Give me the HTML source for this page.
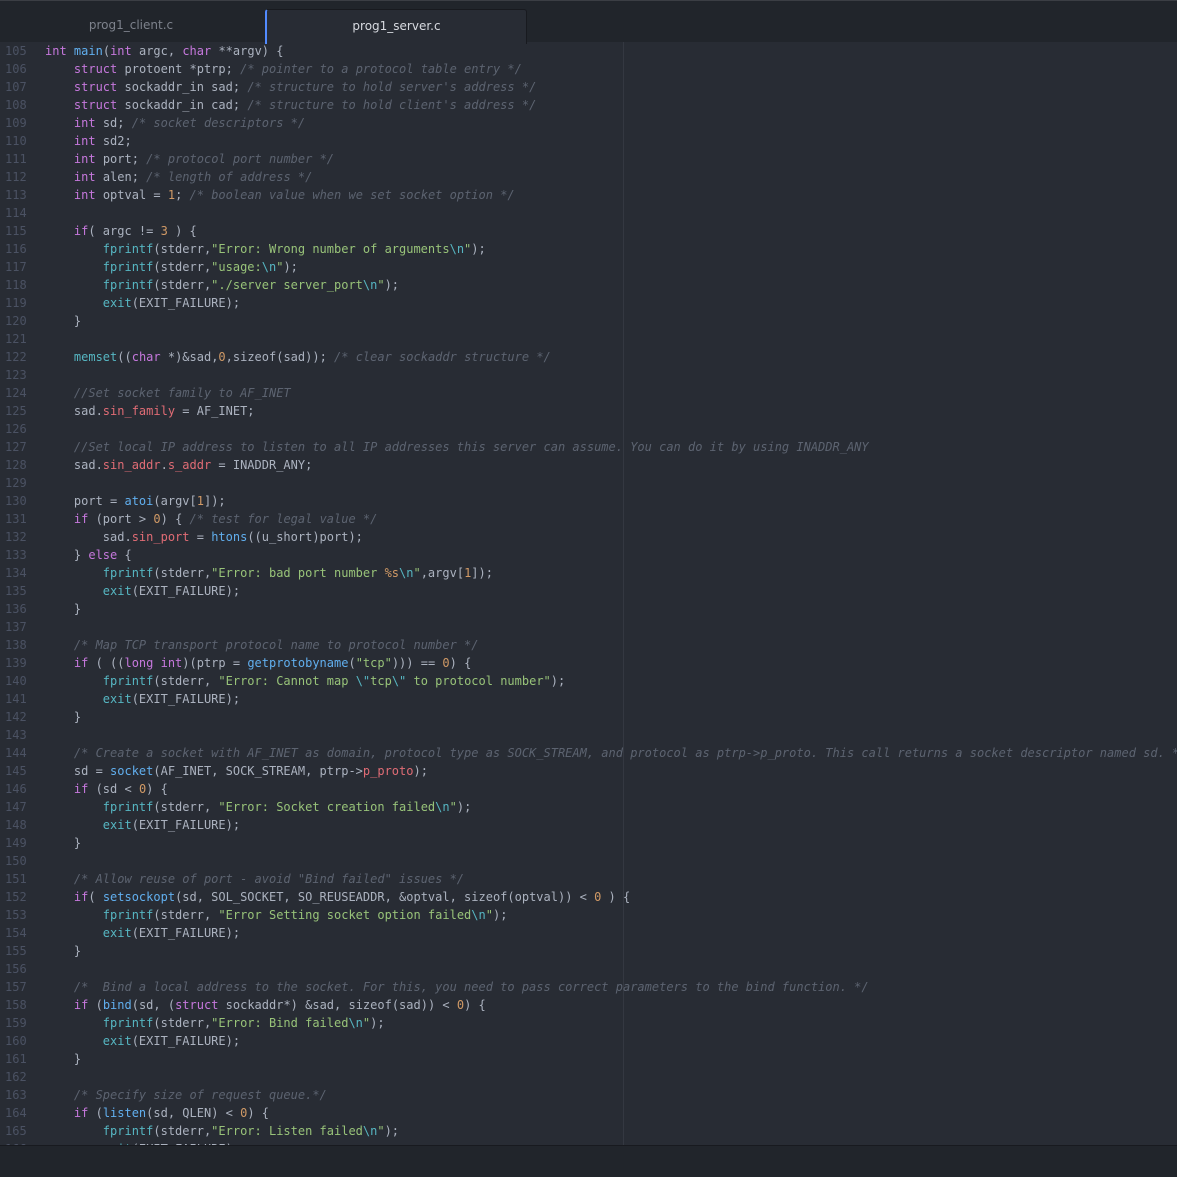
<!DOCTYPE html>
<html><head><meta charset="utf-8"><style>
html,body{margin:0;padding:0;}
body{width:1177px;height:1176px;overflow:hidden;background:#282c34;position:relative;font-family:"DejaVu Sans Mono","Liberation Mono",monospace;}
#top{position:absolute;left:0;top:0;width:1177px;height:42px;background:#21252b;border-top:1px solid #3b3e44;box-sizing:border-box;}
.tab{position:absolute;top:8px;height:34px;font:12px "DejaVu Sans","Liberation Sans",sans-serif;line-height:32px;text-align:center;}
#t1{left:0;width:262px;color:#7d828c;}
#t2{left:265px;width:259px;background:#282c34;color:#d7dae0;border-left:2px solid #528bff;border-right:1px solid #181a1f;border-top:1px solid #181a1f;border-radius:3px 3px 0 0;}
#code{position:absolute;left:0;top:42px;width:1177px;height:1103px;overflow:hidden;}
.l{height:18px;line-height:18px;font-size:12px;white-space:pre;color:#abb2bf;position:relative;}
.g{position:absolute;left:5px;width:30px;color:#4b5263;}
.t{position:absolute;left:45px;}
.k{color:#c678dd}.f{color:#61afef}.b{color:#56b6c2}.c{color:#5c6370;font-style:italic}.s{color:#98c379}.n{color:#d19a66}.m{color:#e06c75}.e{color:#56b6c2}
#wrap{position:absolute;left:623px;top:42px;width:1px;height:1103px;background:#343841;}
#bot{position:absolute;left:0;top:1145px;width:1177px;height:31px;background:#21252b;border-top:1px solid #181a1f;}
</style></head><body>
<div id="top"><div class="tab" id="t1">prog1_client.c</div><div class="tab" id="t2">prog1_server.c</div></div>
<div id="wrap"></div>
<div id="code">
<div class="l"><span class="g">105</span><span class="t"><span class="k">int</span> <span class="f">main</span>(<span class="k">int</span> argc, <span class="k">char</span> **argv) {</span></div>
<div class="l"><span class="g">106</span><span class="t">    <span class="k">struct</span> protoent *ptrp; <span class="c">/* pointer to a protocol table entry */</span></span></div>
<div class="l"><span class="g">107</span><span class="t">    <span class="k">struct</span> sockaddr_in sad; <span class="c">/* structure to hold server's address */</span></span></div>
<div class="l"><span class="g">108</span><span class="t">    <span class="k">struct</span> sockaddr_in cad; <span class="c">/* structure to hold client's address */</span></span></div>
<div class="l"><span class="g">109</span><span class="t">    <span class="k">int</span> sd; <span class="c">/* socket descriptors */</span></span></div>
<div class="l"><span class="g">110</span><span class="t">    <span class="k">int</span> sd2;</span></div>
<div class="l"><span class="g">111</span><span class="t">    <span class="k">int</span> port; <span class="c">/* protocol port number */</span></span></div>
<div class="l"><span class="g">112</span><span class="t">    <span class="k">int</span> alen; <span class="c">/* length of address */</span></span></div>
<div class="l"><span class="g">113</span><span class="t">    <span class="k">int</span> optval = <span class="n">1</span>; <span class="c">/* boolean value when we set socket option */</span></span></div>
<div class="l"><span class="g">114</span></div>
<div class="l"><span class="g">115</span><span class="t">    <span class="k">if</span>( argc != <span class="n">3</span> ) {</span></div>
<div class="l"><span class="g">116</span><span class="t">        <span class="b">fprintf</span>(stderr,<span class="s">"Error: Wrong number of arguments<span class="e">\n</span>"</span>);</span></div>
<div class="l"><span class="g">117</span><span class="t">        <span class="b">fprintf</span>(stderr,<span class="s">"usage:<span class="e">\n</span>"</span>);</span></div>
<div class="l"><span class="g">118</span><span class="t">        <span class="b">fprintf</span>(stderr,<span class="s">"./server server_port<span class="e">\n</span>"</span>);</span></div>
<div class="l"><span class="g">119</span><span class="t">        <span class="b">exit</span>(EXIT_FAILURE);</span></div>
<div class="l"><span class="g">120</span><span class="t">    }</span></div>
<div class="l"><span class="g">121</span></div>
<div class="l"><span class="g">122</span><span class="t">    <span class="b">memset</span>((<span class="k">char</span> *)&amp;sad,<span class="n">0</span>,sizeof(sad)); <span class="c">/* clear sockaddr structure */</span></span></div>
<div class="l"><span class="g">123</span></div>
<div class="l"><span class="g">124</span><span class="t">    <span class="c">//Set socket family to AF_INET</span></span></div>
<div class="l"><span class="g">125</span><span class="t">    sad.<span class="m">sin_family</span> = AF_INET;</span></div>
<div class="l"><span class="g">126</span></div>
<div class="l"><span class="g">127</span><span class="t">    <span class="c">//Set local IP address to listen to all IP addresses this server can assume. You can do it by using INADDR_ANY</span></span></div>
<div class="l"><span class="g">128</span><span class="t">    sad.<span class="m">sin_addr</span>.<span class="m">s_addr</span> = INADDR_ANY;</span></div>
<div class="l"><span class="g">129</span></div>
<div class="l"><span class="g">130</span><span class="t">    port = <span class="f">atoi</span>(argv[<span class="n">1</span>]);</span></div>
<div class="l"><span class="g">131</span><span class="t">    <span class="k">if</span> (port &gt; <span class="n">0</span>) { <span class="c">/* test for legal value */</span></span></div>
<div class="l"><span class="g">132</span><span class="t">        sad.<span class="m">sin_port</span> = <span class="f">htons</span>((u_short)port);</span></div>
<div class="l"><span class="g">133</span><span class="t">    } <span class="k">else</span> {</span></div>
<div class="l"><span class="g">134</span><span class="t">        <span class="b">fprintf</span>(stderr,<span class="s">"Error: bad port number <span class="n">%s</span><span class="e">\n</span>"</span>,argv[<span class="n">1</span>]);</span></div>
<div class="l"><span class="g">135</span><span class="t">        <span class="b">exit</span>(EXIT_FAILURE);</span></div>
<div class="l"><span class="g">136</span><span class="t">    }</span></div>
<div class="l"><span class="g">137</span></div>
<div class="l"><span class="g">138</span><span class="t">    <span class="c">/* Map TCP transport protocol name to protocol number */</span></span></div>
<div class="l"><span class="g">139</span><span class="t">    <span class="k">if</span> ( ((<span class="k">long int</span>)(ptrp = <span class="f">getprotobyname</span>(<span class="s">"tcp"</span>))) == <span class="n">0</span>) {</span></div>
<div class="l"><span class="g">140</span><span class="t">        <span class="b">fprintf</span>(stderr, <span class="s">"Error: Cannot map <span class="e">\"</span>tcp<span class="e">\"</span> to protocol number"</span>);</span></div>
<div class="l"><span class="g">141</span><span class="t">        <span class="b">exit</span>(EXIT_FAILURE);</span></div>
<div class="l"><span class="g">142</span><span class="t">    }</span></div>
<div class="l"><span class="g">143</span></div>
<div class="l"><span class="g">144</span><span class="t">    <span class="c">/* Create a socket with AF_INET as domain, protocol type as SOCK_STREAM, and protocol as ptrp-&gt;p_proto. This call returns a socket descriptor named sd. */</span></span></div>
<div class="l"><span class="g">145</span><span class="t">    sd = <span class="f">socket</span>(AF_INET, SOCK_STREAM, ptrp-&gt;<span class="m">p_proto</span>);</span></div>
<div class="l"><span class="g">146</span><span class="t">    <span class="k">if</span> (sd &lt; <span class="n">0</span>) {</span></div>
<div class="l"><span class="g">147</span><span class="t">        <span class="b">fprintf</span>(stderr, <span class="s">"Error: Socket creation failed<span class="e">\n</span>"</span>);</span></div>
<div class="l"><span class="g">148</span><span class="t">        <span class="b">exit</span>(EXIT_FAILURE);</span></div>
<div class="l"><span class="g">149</span><span class="t">    }</span></div>
<div class="l"><span class="g">150</span></div>
<div class="l"><span class="g">151</span><span class="t">    <span class="c">/* Allow reuse of port - avoid "Bind failed" issues */</span></span></div>
<div class="l"><span class="g">152</span><span class="t">    <span class="k">if</span>( <span class="f">setsockopt</span>(sd, SOL_SOCKET, SO_REUSEADDR, &amp;optval, sizeof(optval)) &lt; <span class="n">0</span> ) {</span></div>
<div class="l"><span class="g">153</span><span class="t">        <span class="b">fprintf</span>(stderr, <span class="s">"Error Setting socket option failed<span class="e">\n</span>"</span>);</span></div>
<div class="l"><span class="g">154</span><span class="t">        <span class="b">exit</span>(EXIT_FAILURE);</span></div>
<div class="l"><span class="g">155</span><span class="t">    }</span></div>
<div class="l"><span class="g">156</span></div>
<div class="l"><span class="g">157</span><span class="t">    <span class="c">/*  Bind a local address to the socket. For this, you need to pass correct parameters to the bind function. */</span></span></div>
<div class="l"><span class="g">158</span><span class="t">    <span class="k">if</span> (<span class="f">bind</span>(sd, (<span class="k">struct</span> sockaddr*) &amp;sad, sizeof(sad)) &lt; <span class="n">0</span>) {</span></div>
<div class="l"><span class="g">159</span><span class="t">        <span class="b">fprintf</span>(stderr,<span class="s">"Error: Bind failed<span class="e">\n</span>"</span>);</span></div>
<div class="l"><span class="g">160</span><span class="t">        <span class="b">exit</span>(EXIT_FAILURE);</span></div>
<div class="l"><span class="g">161</span><span class="t">    }</span></div>
<div class="l"><span class="g">162</span></div>
<div class="l"><span class="g">163</span><span class="t">    <span class="c">/* Specify size of request queue.*/</span></span></div>
<div class="l"><span class="g">164</span><span class="t">    <span class="k">if</span> (<span class="f">listen</span>(sd, QLEN) &lt; <span class="n">0</span>) {</span></div>
<div class="l"><span class="g">165</span><span class="t">        <span class="b">fprintf</span>(stderr,<span class="s">"Error: Listen failed<span class="e">\n</span>"</span>);</span></div>
<div class="l"><span class="g">166</span><span class="t">        <span class="b">exit</span>(EXIT_FAILURE);</span></div>
</div>
<div id="bot"></div>
</body></html>
